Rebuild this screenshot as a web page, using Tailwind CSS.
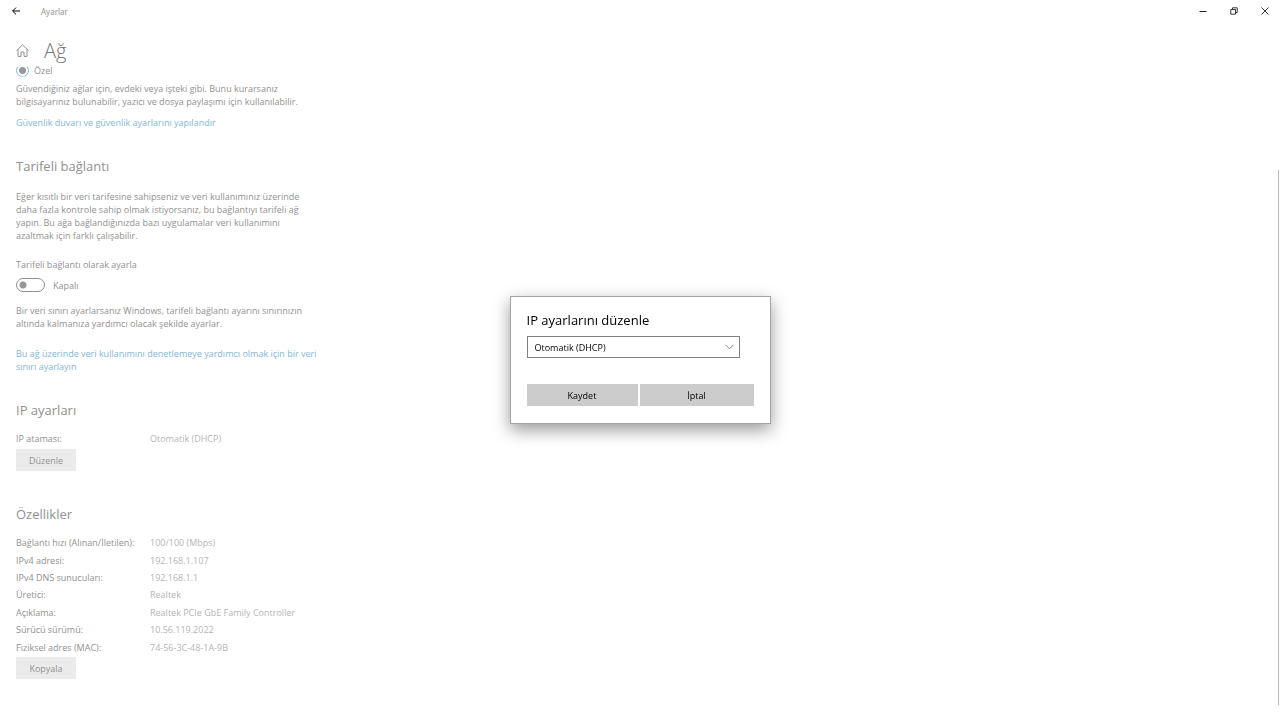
<!DOCTYPE html>
<html lang="tr">
<head>
    <meta charset="UTF-8">
    <meta name="viewport" content="width=device-width, initial-scale=1.0">
    <title>Ayarlar</title>
    <script src="https://cdn.jsdelivr.net/npm/@tailwindcss/browser@4"></script>
</head>
<body class="relative min-h-screen flex flex-col bg-white text-[#919191] text-[9px] leading-[13px] font-['Open_Sans','Noto_Sans',sans-serif]">

    <!-- Title bar -->
    <header class="flex items-center h-[22px] pl-3 pr-[7px]">
        <button aria-label="Geri" class="text-black">
            <svg class="w-2 h-2" viewBox="0 0 8 8" fill="none" stroke="currentColor"><path d="M8 4H.8M4 .6.6 4 4 7.4"/></svg>
        </button>
        <span class="ml-[21px] text-[8px] font-['Noto_Sans',sans-serif]">Ayarlar</span>
        <div class="ml-auto flex items-center gap-[15px] text-[#222]">
            <button aria-label="Simge durumuna küçült" class="w-4 flex justify-center">
                <svg class="w-2 h-2" viewBox="0 0 8 8" fill="none" stroke="currentColor"><path d="M.5 4.5h7"/></svg>
            </button>
            <button aria-label="Önceki boyut" class="w-4 flex justify-center">
                <svg class="w-2 h-2" viewBox="0 0 8 8" fill="none" stroke="currentColor" stroke-width=".9"><path d="M.8 2.5h4.7v4.7H.8zM2.5 2.3V.8h4.7v4.7H5.7"/></svg>
            </button>
            <button aria-label="Kapat" class="w-4 flex justify-center">
                <svg class="w-2 h-2" viewBox="0 0 8 8" fill="none" stroke="currentColor" stroke-width=".9"><path d="m.5.5 7 7M7.5.5l-7 7"/></svg>
            </button>
        </div>
    </header>

    <!-- Page heading -->
    <div class="flex items-center h-[41px] pt-4 pl-4">
        <a href="#" aria-label="Giriş">
            <svg class="w-[13px] h-[13px]" viewBox="0 0 13 13" fill="none" stroke="currentColor"><path d="M.5 6.6 6.5.8l6 5.8M2 5.4v7h3V8h3v4.4h3v-7"/></svg>
        </a>
        <h1 class="ml-[15px] text-[20px] leading-6 font-light text-[#777]">Ağ</h1>
    </div>

    <main class="flex-1 pl-4">
        <div class="w-[320px]">
            <!-- Top of the radio is scrolled under the heading -->
            <label class="flex items-center gap-[5px] h-[14px]">
                <input type="radio" name="profil" checked class="appearance-none w-[13px] h-[13px] rounded-full border border-[#7db9e0] bg-[radial-gradient(circle,#969696_3px,transparent_4px)] [clip-path:inset(3px_0_0_0)]">
                Özel
            </label>
            <p class="mt-[5px]">Güvendiğiniz ağlar için, evdeki veya işteki gibi. Bunu kurarsanız<br>bilgisayarınız bulunabilir, yazıcı ve dosya paylaşımı için kullanılabilir.</p>
            <a href="#" class="block mt-2 text-[#7fb7d9]">Güvenlik duvarı ve güvenlik ayarlarını yapılandır</a>

            <h2 class="mt-[27px] text-[13px] leading-5">Tarifeli bağlantı</h2>
            <p class="mt-[14px]">Eğer kısıtlı bir veri tarifesine sahipseniz ve veri kullanımınız üzerinde<br>daha fazla kontrole sahip olmak istiyorsanız, bu bağlantıyı tarifeli ağ<br>yapın. Bu ağa bağlandığınızda bazı uygulamalar veri kullanımını<br>azaltmak için farklı çalışabilir.</p>
            <label for="tarifeli" class="block mt-4">Tarifeli bağlantı olarak ayarla</label>
            <div class="mt-[7px] flex items-center gap-2 h-[14px]">
                <input id="tarifeli" type="checkbox" role="switch" class="appearance-none w-[29px] h-[14px] rounded-full border border-[#8f8f8f] bg-[radial-gradient(circle_at_6px_50%,#969696_3px,transparent_4px)]">
                <span>Kapalı</span>
            </div>
            <p class="mt-3">Bir veri sınırı ayarlarsanız Windows, tarifeli bağlantı ayarını sınırınızın<br>altında kalmanıza yardımcı olacak şekilde ayarlar.</p>
            <a href="#" class="block mt-[17px] text-[#7fb7d9]">Bu ağ üzerinde veri kullanımını denetlemeye yardımcı olmak için bir veri<br>sınırı ayarlayın</a>

            <h2 class="mt-[27px] text-[13px] leading-5">IP ayarları</h2>
            <dl class="mt-3 flex h-[14px]">
                <dt class="w-[134px]">IP ataması:</dt>
                <dd class="text-[#b5b5b5]">Otomatik (DHCP)</dd>
            </dl>
            <button class="block mt-[3px] w-[60px] h-[22px] bg-[#ebebeb]">Düzenle</button>

            <h2 class="mt-[33px] text-[13px] leading-5">Özellikler</h2>
            <table class="mt-[10px] w-full h-[122px] text-left whitespace-nowrap">
                <tbody>
                    <tr><th scope="row" class="w-[134px] p-0 font-normal">Bağlantı hızı (Alınan/İletilen):</th><td class="p-0 text-[#b5b5b5]">100/100 (Mbps)</td></tr>
                    <tr><th scope="row" class="p-0 font-normal">IPv4 adresi:</th><td class="p-0 text-[#b5b5b5]">192.168.1.107</td></tr>
                    <tr><th scope="row" class="p-0 font-normal">IPv4 DNS sunucuları:</th><td class="p-0 text-[#b5b5b5]">192.168.1.1</td></tr>
                    <tr><th scope="row" class="p-0 font-normal">Üretici:</th><td class="p-0 text-[#b5b5b5]">Realtek</td></tr>
                    <tr><th scope="row" class="p-0 font-normal">Açıklama:</th><td class="p-0 text-[#b5b5b5]">Realtek PCIe GbE Family Controller</td></tr>
                    <tr><th scope="row" class="p-0 font-normal">Sürücü sürümü:</th><td class="p-0 text-[#b5b5b5]">10.56.119.2022</td></tr>
                    <tr><th scope="row" class="p-0 font-normal">Fiziksel adres (MAC):</th><td class="p-0 text-[#b5b5b5]">74-56-3C-48-1A-9B</td></tr>
                </tbody>
            </table>
            <button class="block mt-px w-[60px] h-[22px] bg-[#ebebeb]">Kopyala</button>
        </div>
    </main>

    <!-- Scrollbar thumb -->
    <div class="absolute right-px top-[170px] bottom-[15px] w-px bg-[#b8b8b8]"></div>

    <!-- Dialog -->
    <div class="fixed inset-0 flex items-center justify-center">
        <div role="dialog" aria-labelledby="baslik" class="w-[261px] px-4 pt-[13px] pb-[17px] bg-white text-black border border-[#a3a3a3] shadow-[0_6px_16px_rgba(0,0,0,0.4)]">
            <h2 id="baslik" class="text-[13px] leading-5">IP ayarlarını düzenle</h2>
            <div class="relative mt-[6px] w-[213px]">
                <select aria-labelledby="baslik" class="block appearance-none w-full h-[22px] pl-[7px] border border-[#808080] bg-white">
                    <option>Otomatik (DHCP)</option>
                    <option>El ile</option>
                </select>
                <svg class="absolute right-[6px] top-2 w-[9px] h-[6px] pointer-events-none" viewBox="0 0 9 6" fill="none" stroke="#666" stroke-width=".8"><path d="m.5.8 4 4 4-4"/></svg>
            </div>
            <div class="mt-[26px] grid grid-cols-[111px_1fr] gap-[2px]">
                <button class="h-[22px] bg-[#ccc]">Kaydet</button>
                <button class="h-[22px] bg-[#ccc]">İptal</button>
            </div>
        </div>
    </div>

</body>
</html>
